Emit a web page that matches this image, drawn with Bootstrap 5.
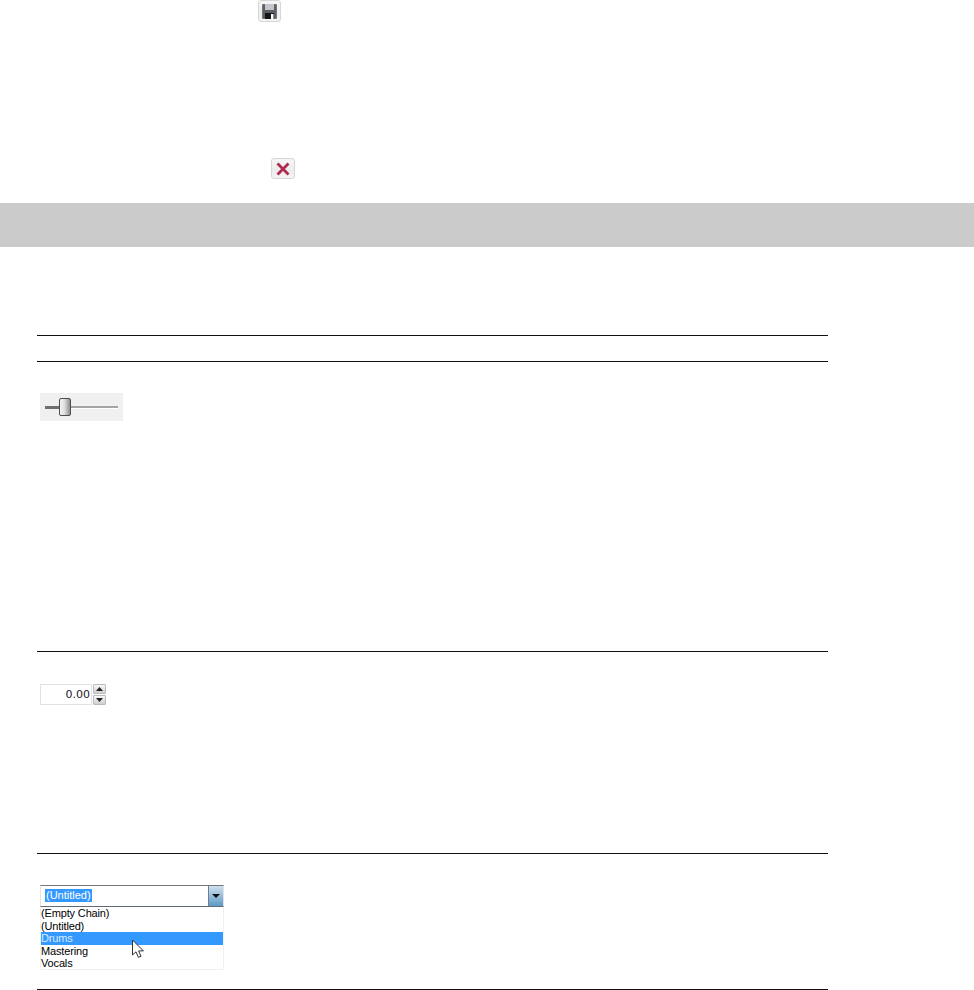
<!DOCTYPE html>
<html lang="en">
<head>
    <meta charset="UTF-8">
    <meta name="viewport" content="width=device-width, initial-scale=1.0">
    <title>Controls</title>
    <link href="https://cdn.jsdelivr.net/npm/bootstrap@5.3.0/dist/css/bootstrap.min.css" rel="stylesheet">
    <style>
        body { background: #fff; font-family: "Liberation Sans", Arial, sans-serif; color: #000; }
        .top-area { height: 203px; }
        .save-btn { margin-left: 258px; width: 23px; height: 22px; }
        .close-btn { margin-left: 271px; margin-top: 136px; width: 24px; height: 21px; }
        .tool-btn { border: 1px solid #d6d6d6; border-radius: 3px; background: linear-gradient(#f6f6f6, #ececec 60%, #f4f4f4); }
        .grey-band { height: 44px; background: #cbcbcb; }
        .doc-table { width: 791px; margin: 88px 0 0 37px; }
        .doc-row { border-top: 1px solid #111; padding-left: 3px; }
        .row-head { height: 26px; }
        .row-slider { height: 290px; padding-top: 31px; }
        .row-spin { height: 202px; padding-top: 32px; }
        .row-combo { height: 136px; padding-top: 31px; }
        .row-end { height: 0; }
        .slider-box { width: 83px; height: 28px; background: #f0f0f0; padding-left: 5px; }
        .slider-track { height: 100%; width: 73px; position: relative; }
        .track-done { width: 14px; height: 3px; background: #6f6f6f; }
        .track-rest { flex: 1; height: 3px; background: #a4a4a4; border-bottom: 1px solid #fff; }
        .slider-thumb { position: absolute; left: 14px; top: 5px; width: 12px; height: 18px; border: 1px solid #4c4c4c; border-radius: 2px; background: linear-gradient(90deg, #f6f6f6, #dedede 45%, #8f8f8f); }
        .spin-box { width: 66px; height: 21px; }
        .spin-input { width: 52px; border: 1px solid #e2e2e2; font-family: "DejaVu Sans", sans-serif; font-size: 11px; line-height: 19px; text-align: right; padding-right: 1px; color: #1a1a2a; }
        .spin-arrows { width: 13px; margin-left: 1px; }
        .spin-arrow { height: 10px; border: 1px solid #bbb; background: linear-gradient(#f8f8f8, #cfcfcf); border-radius: 1px; }
        .combo-wrap { width: 184px; position: relative; }
        .combo-field { height: 22px; border: 1px solid #e3e3e3; border-top-color: #767676; border-bottom-color: #5f6b76; padding: 3px 0 0 4px; }
        .combo-sel { background: #3399ff; color: #fff; font-size: 11px; line-height: 13px; padding: 0 1px; vertical-align: top; }
        .combo-arrow { width: 15px; background: linear-gradient(#cfe0ee, #5f9ac6); border-left: 1px solid #6d7f8e; margin: -3px 0 0 auto; }
        .combo-list { height: 63px; border: 1px solid #f0f0f0; border-top: 0; font-size: 11px; line-height: 12.6px; letter-spacing: -0.15px; }
        .combo-item { padding-left: 0; height: 12.6px; white-space: nowrap; }
        .combo-item.is-hover { background: #3399ff; color: #dbeaff; }
        .mouse-cursor { position: absolute; left: 91px; top: 54px; }
    </style>
</head>
<body>
    <div class="top-area d-flex flex-column align-items-start">
        <div class="save-btn tool-btn d-flex align-items-center justify-content-center">
            <svg width="15" height="16" viewBox="0 0 15 16">
                <path d="M.5 1.5h14v14H.5z" fill="#5c6064" stroke="#777" stroke-width="1"/>
                <path d="M3 1h9v6H3z" fill="#c2c6ca"/>
                <path d="M3 10h9v6H3z" fill="#151515"/>
                <path d="M9 11h2.5v5H9z" fill="#fff"/>
            </svg>
        </div>
        <div class="close-btn tool-btn d-flex align-items-center justify-content-center">
            <svg width="14" height="14" viewBox="0 0 14 14">
                <path d="M1.5 1.5l11 11M12.5 1.5l-11 11" stroke="#b02a50" stroke-width="2.8" fill="none"/>
            </svg>
        </div>
    </div>

    <div class="grey-band"></div>

    <div class="doc-table">
        <div class="doc-row row-head"></div>

        <div class="doc-row row-slider">
            <div class="slider-box">
                <div class="slider-track d-flex align-items-center">
                    <div class="track-done"></div>
                    <div class="track-rest"></div>
                    <div class="slider-thumb"></div>
                </div>
            </div>
        </div>

        <div class="doc-row row-spin">
            <div class="spin-box d-flex">
                <div class="spin-input">0.00</div>
                <div class="spin-arrows d-flex flex-column justify-content-between">
                    <div class="spin-arrow d-flex align-items-center justify-content-center">
                        <svg width="7" height="4" viewBox="0 0 7 4"><path d="M3.5 0L7 4H0z" fill="#222"/></svg>
                    </div>
                    <div class="spin-arrow d-flex align-items-center justify-content-center">
                        <svg width="7" height="4" viewBox="0 0 7 4"><path d="M0 0h7L3.5 4z" fill="#222"/></svg>
                    </div>
                </div>
            </div>
        </div>

        <div class="doc-row row-combo">
            <div class="combo-wrap">
                <div class="combo-field d-flex">
                    <div class="d-flex align-items-start"><span class="combo-sel">(Untitled)</span></div>
                    <div class="combo-arrow d-flex align-items-center justify-content-center">
                        <svg width="8" height="4" viewBox="0 0 8 4"><path d="M0 0h8L4 4z" fill="#111"/></svg>
                    </div>
                </div>
                <div class="combo-list">
                    <div class="combo-item">(Empty Chain)</div>
                    <div class="combo-item">(Untitled)</div>
                    <div class="combo-item is-hover">Drums</div>
                    <div class="combo-item">Mastering</div>
                    <div class="combo-item">Vocals</div>
                </div>
                <svg class="mouse-cursor" width="15" height="20" viewBox="0 0 15 20">
                    <path d="M1.5 1v15l3.5-3.2 2.4 5.6 2.6-1.1-2.4-5.4h4.8z" fill="#fff" stroke="#333" stroke-width="1"/>
                </svg>
            </div>
        </div>

        <div class="doc-row row-end"></div>
    </div>

    <script src="https://cdn.jsdelivr.net/npm/bootstrap@5.3.0/dist/js/bootstrap.bundle.min.js"></script>
</body>
</html>
